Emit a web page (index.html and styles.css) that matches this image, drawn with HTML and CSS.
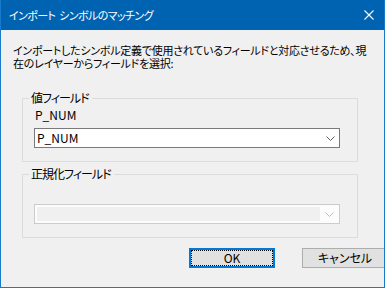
FILE: index.html
```html
<!DOCTYPE html>
<html lang="ja">
<head>
<meta charset="utf-8">
<title>インポート シンボルのマッチング</title>
<link rel="stylesheet" href="styles.css">
</head>
<body>
<div class="window">
  <div class="titlebar">
    <span class="title">インポート シンボルのマッチング</span>
    <svg class="close" width="10" height="10" viewBox="0 0 10 10"><path d="M0.5 0.5 L9.5 9.5 M9.5 0.5 L0.5 9.5" stroke="#fff" stroke-width="1.1" fill="none"/></svg>
  </div>
  <div class="client">
    <p class="desc">インポートしたシンボル定義で使用されているフィールドと対応させるため、現<br>在のレイヤーからフィールドを選択:</p>
    <fieldset class="group">
      <legend>値フィールド</legend>
      <div class="fieldname">P_NUM</div>
      <div class="combo">
        <span class="combo-text">P_NUM</span>
        <span class="combo-btn"><svg width="9" height="5" viewBox="0 0 9 5"><polyline points="0.5,0.5 4.5,4.5 8.5,0.5" fill="none" stroke="#606060" stroke-width="1"/></svg></span>
      </div>
    </fieldset>
    <fieldset class="group">
      <legend>正規化フィールド</legend>
      <div class="fieldname"></div>
      <div class="combo disabled">
        <span class="combo-text"></span>
        <span class="combo-btn"><svg width="9" height="5" viewBox="0 0 9 5"><polyline points="0.5,0.5 4.5,4.5 8.5,0.5" fill="none" stroke="#bfbfbf" stroke-width="1"/></svg></span>
      </div>
    </fieldset>
    <div class="buttons">
      <button class="btn default"><span class="focus">OK</span></button>
      <button class="btn">キャンセル</button>
    </div>
  </div>
</div>
</body>
</html>
```
FILE: styles.css
```css
html, body {
  margin: 0;
  padding: 0;
}
body {
  font-family: "Noto Sans CJK JP", "Noto Sans", sans-serif;
  font-feature-settings: "palt";
  color: #000;
  background: #f0f0f0;
}
.window {
  width: 385px;
  height: 288px;
  box-sizing: border-box;
  border: 1px solid #1979ca;
  border-top: 0;
  background: #f0f0f0;
  overflow: hidden;
}
.titlebar {
  height: 30px;
  margin: 0 -1px;
  background: #0063b1;
  display: flex;
  align-items: center;
  padding: 0 0 0 9px;
  color: #fff;
}
.title {
  font-size: 11px;
  letter-spacing: -0.6px;
  word-spacing: 2px;
  line-height: 14px;
  flex: 1;
  padding-bottom: 1px;
}
.close {
  margin-right: 11px;
  margin-bottom: 1px;
}
.client {
  height: 257px;
  overflow: hidden;
}
.desc {
  margin: 0;
  padding: 14px 0 0 12px;
  font-size: 11px;
  letter-spacing: -0.25px;
  line-height: 13px;
  white-space: nowrap;
}
.group {
  margin: 21px 0 0 21px;
  width: 336px;
  box-sizing: border-box;
  border: 1px solid #dcdcdc;
  padding: 3px 0 13px 11px;
  min-width: 0;
}
.group + .group {
  margin-top: 5px;
}
.group legend {
  padding: 0 3px 0 2px;
  margin-left: -5px;
  font-size: 12px;
  letter-spacing: -1px;
  line-height: 14px;
}
.fieldname {
  height: 13px;
  font-size: 12px;
  line-height: 13px;
  margin-left: 1px;
}
.combo {
  margin-top: 7px;
  width: 306px;
  height: 20px;
  box-sizing: border-box;
  border: 1px solid #7a7a7a;
  background: #fff;
  display: flex;
}
.combo-text {
  flex: 1;
  font-size: 12px;
  line-height: 18px;
  padding-left: 2px;
}
.combo-btn {
  width: 17px;
  display: flex;
  align-items: center;
  justify-content: center;
  padding-top: 1px;
}
.combo.disabled {
  border-color: #cccccc;
  background: #fcfcfc;
}
.combo.disabled .combo-text {
  margin: 2px 0 2px 2px;
  background: #f0f0f0;
}
.combo.disabled .combo-btn {
  width: 19px;
}
.buttons {
  display: flex;
  gap: 27px;
  margin: 10px 0 0 188px;
}
.btn {
  flex: none;
  width: 86px;
  height: 20px;
  box-sizing: border-box;
  border: 1px solid #adadad;
  background: #e1e1e1;
  font-family: "Noto Sans CJK JP", "Noto Sans", sans-serif;
  font-feature-settings: "palt";
  font-size: 12px;
  line-height: 16px;
  color: #000;
  padding: 0;
  margin: 0;
  border-radius: 0;
}
.btn.default {
  border: 2px solid #0078d7;
  display: flex;
}
.focus {
  flex: 1;
  border: 1px dotted #000;
  line-height: 14px;
}
```
